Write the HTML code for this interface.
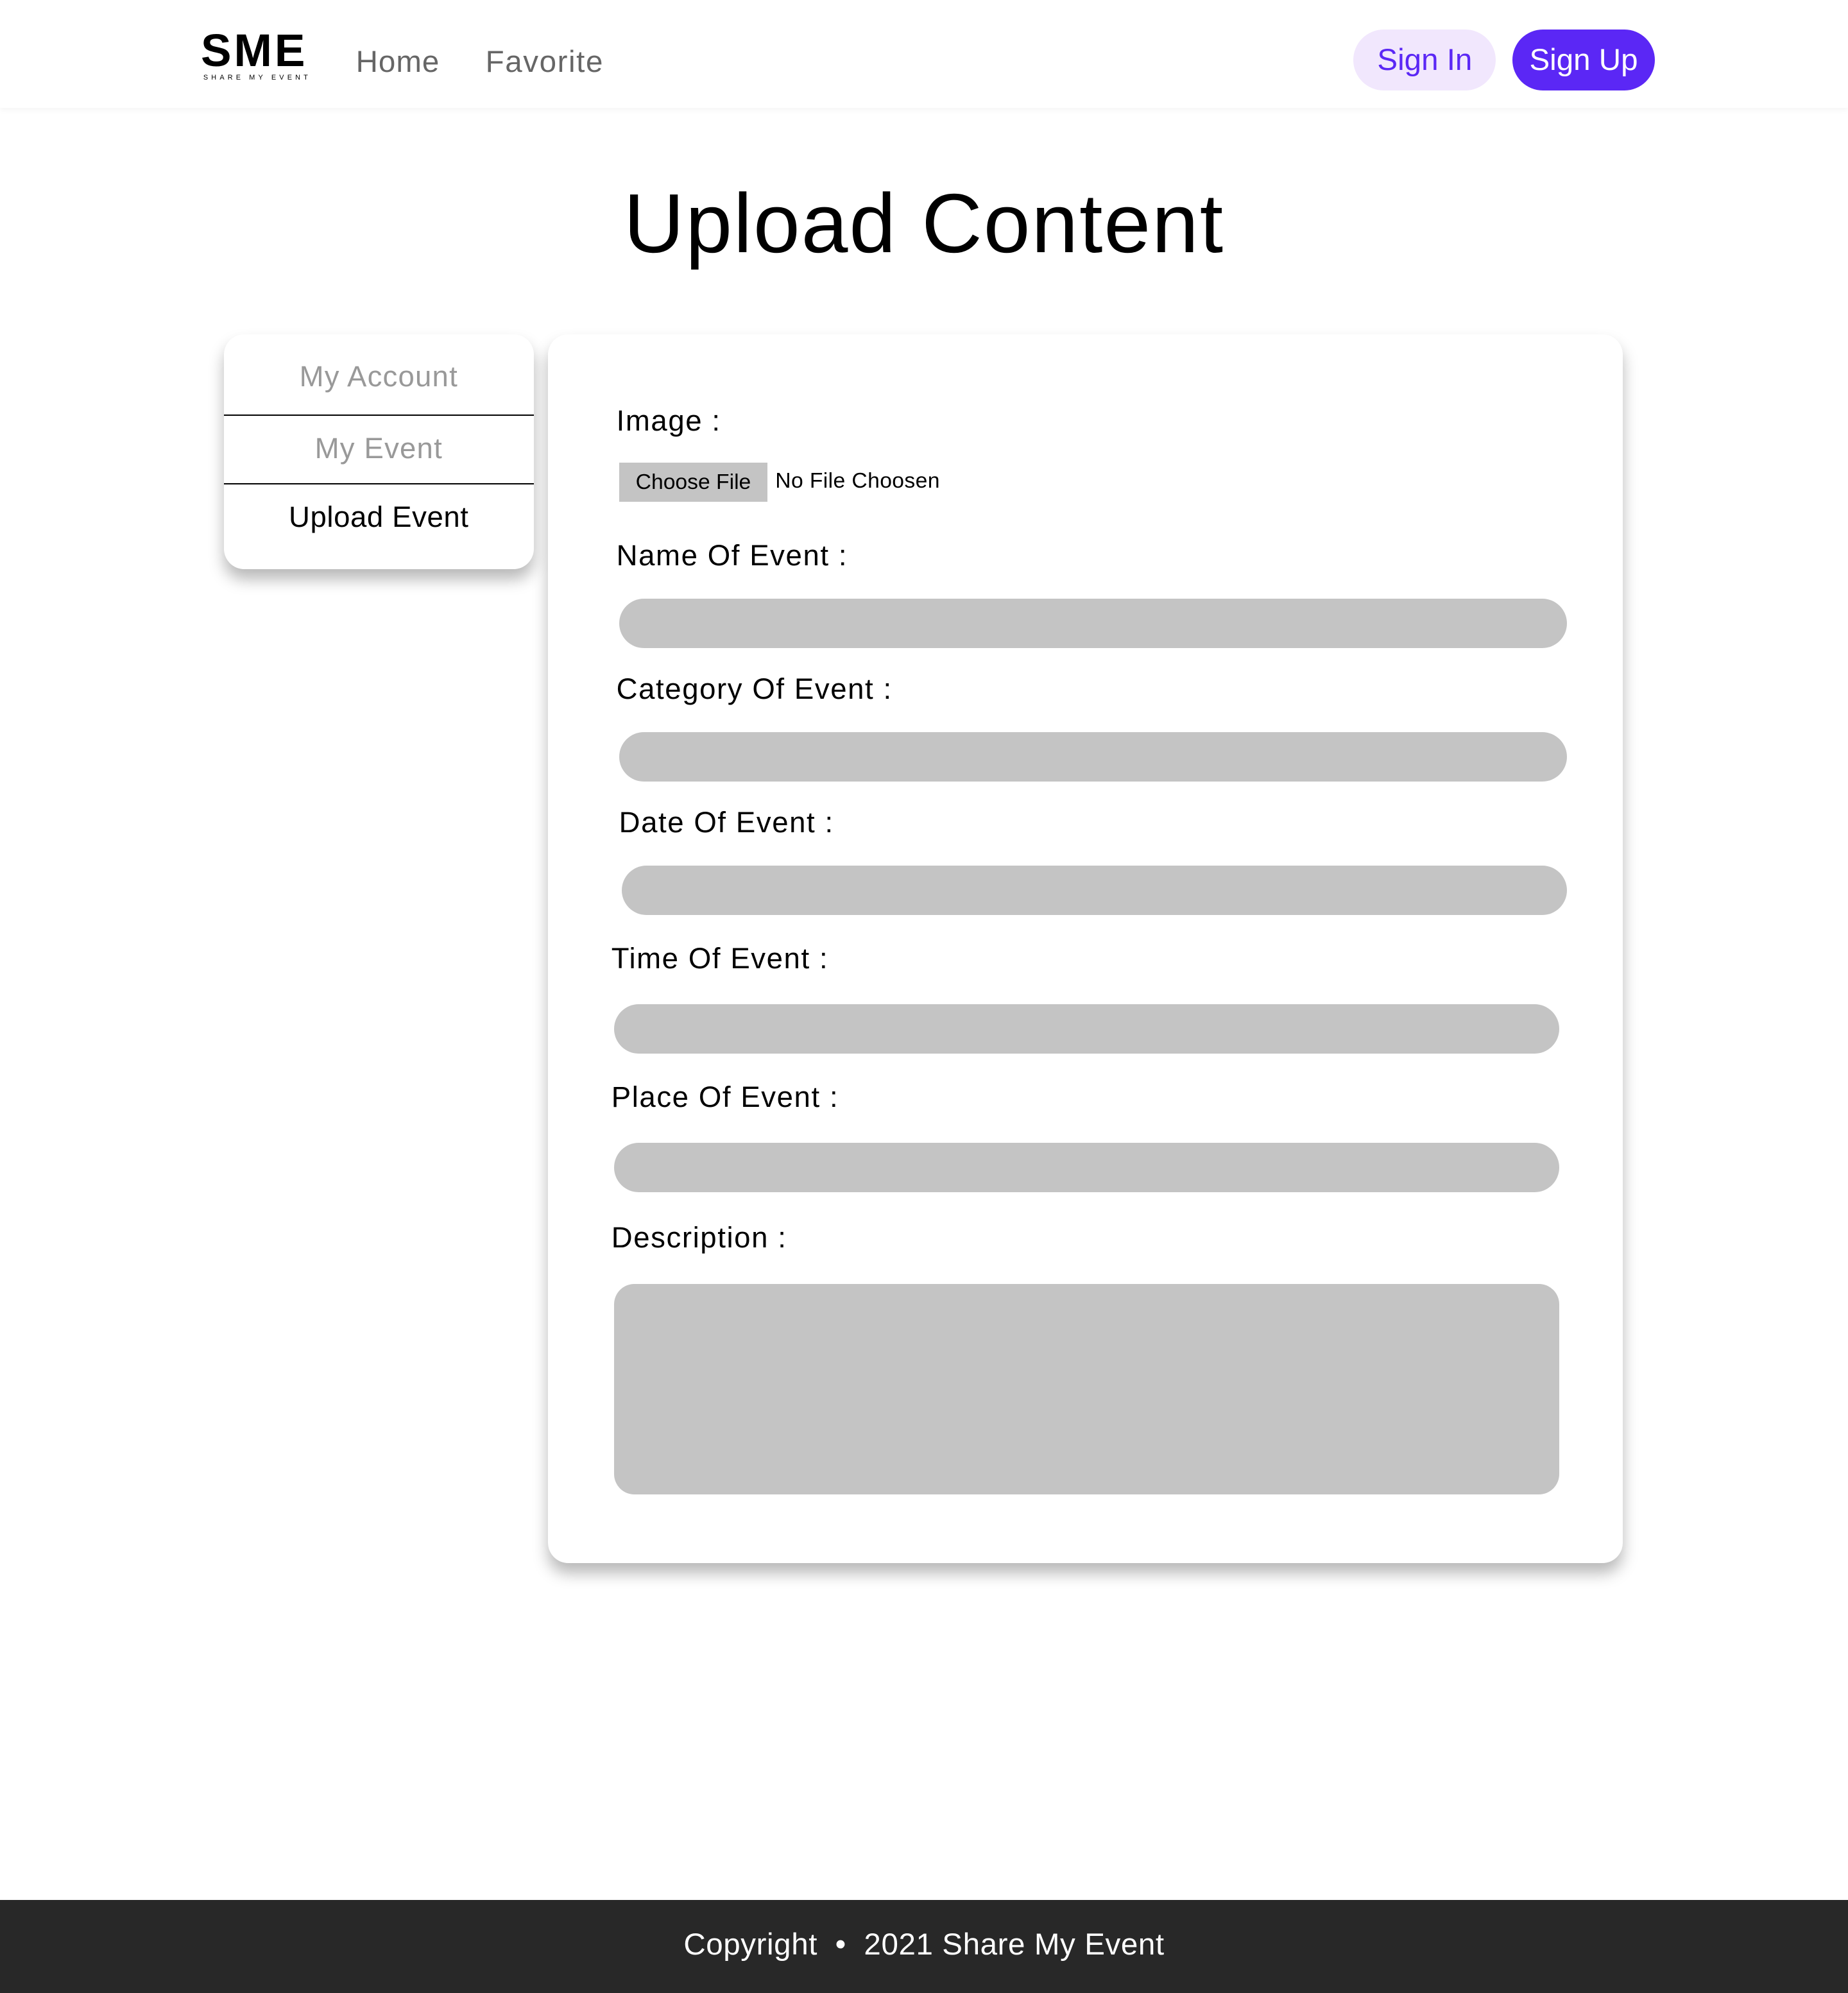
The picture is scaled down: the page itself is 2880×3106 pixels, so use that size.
<!DOCTYPE html>
<html><head><meta charset="utf-8"><style>
html,body{margin:0;padding:0;background:#fff}
body{width:1454px;height:1568px;zoom:1.98074;position:relative;overflow:hidden;font-family:"Liberation Sans",sans-serif}
.a{position:absolute}
.nav{left:0;top:0;width:1454px;height:85px;background:#fff;box-shadow:0 2px 4px rgba(0,0,0,.04)}
.lab{font-size:23px;color:#000;letter-spacing:.8px}
.inp{background:#c4c4c4;border-radius:20px;height:39px}
.card{box-shadow:0 8px 12px rgba(0,0,0,.28)}
</style></head><body>
<div class="a nav"></div>
<div class="a" style="left:158px;top:22px;font-size:36px;font-weight:bold;letter-spacing:2px;line-height:36px;color:#000">SME</div>
<div class="a" style="left:160px;top:58px;font-size:5.5px;letter-spacing:2.6px;color:#000">SHARE MY EVENT</div>
<div class="a" style="left:280px;top:35px;font-size:24px;color:#666;letter-spacing:.5px">Home</div>
<div class="a" style="left:382px;top:35px;font-size:24px;color:#666;letter-spacing:.8px">Favorite</div>
<div class="a" style="left:1065px;top:23px;width:112px;height:48px;border-radius:24px;background:#f1e7fd;color:#5b27f5;font-size:24px;line-height:48px;text-align:center">Sign In</div>
<div class="a" style="left:1190px;top:23px;width:112px;height:48px;border-radius:24px;background:#5b27f5;color:#fff;font-size:24px;line-height:48px;text-align:center">Sign Up</div>
<div class="a" style="left:0;width:1454px;top:138px;text-align:center;font-size:66px;color:#000;letter-spacing:1px">Upload Content</div>

<div class="a card" style="left:176px;top:263px;width:244px;height:185px;border-radius:16px;background:#fff">
<div class="a" style="left:0;top:20px;width:244px;text-align:center;font-size:23px;color:#999;letter-spacing:.6px">My Account</div>
<div class="a" style="left:0;top:63px;width:244px;height:1px;background:#000"></div>
<div class="a" style="left:0;top:77px;width:244px;text-align:center;font-size:23px;color:#999;letter-spacing:.6px">My Event</div>
<div class="a" style="left:0;top:117px;width:244px;height:1px;background:#000"></div>
<div class="a" style="left:0;top:131px;width:244px;text-align:center;font-size:23px;color:#000;letter-spacing:.3px">Upload Event</div>
</div>

<div class="a card" style="left:431px;top:263px;width:846px;height:967px;border-radius:16px;background:#fff"></div>
<div class="a lab" style="left:485px;top:318px">Image :</div>
<div class="a" style="left:487px;top:364px;width:117px;height:31px;background:#c4c4c4;font-size:17px;line-height:31px;text-align:center">Choose File</div>
<div class="a" style="left:610px;top:369px;font-size:17px;letter-spacing:.2px">No File Choosen</div>
<div class="a lab" style="left:485px;top:424px">Name Of Event :</div>
<div class="a inp" style="left:487px;top:471px;width:746px"></div>
<div class="a lab" style="left:485px;top:529px">Category Of Event :</div>
<div class="a inp" style="left:487px;top:576px;width:746px"></div>
<div class="a lab" style="left:487px;top:634px">Date Of Event :</div>
<div class="a inp" style="left:489px;top:681px;width:744px"></div>
<div class="a lab" style="left:481px;top:741px">Time Of Event :</div>
<div class="a inp" style="left:483px;top:790px;width:744px"></div>
<div class="a lab" style="left:481px;top:850px">Place Of Event :</div>
<div class="a inp" style="left:483px;top:899px;width:744px"></div>
<div class="a lab" style="left:481px;top:961px">Description :</div>
<div class="a" style="left:483px;top:1010px;width:744px;height:166px;background:#c4c4c4;border-radius:16px"></div>

<div class="a" style="left:0;top:1495px;width:1454px;height:73px;background:#282828;color:#fff;font-size:24px;line-height:71px;text-align:center;letter-spacing:.3px">Copyright &nbsp;•&nbsp; 2021 Share My Event</div>
</body></html>
